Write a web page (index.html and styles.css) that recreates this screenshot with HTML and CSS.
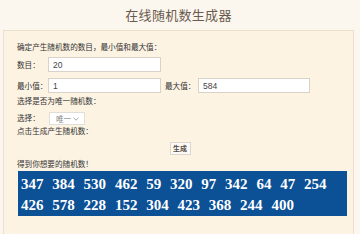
FILE: index.html
```html
<!DOCTYPE html>
<html lang="zh-CN">
<head>
    <meta charset="UTF-8">
    <meta name="viewport" content="width=device-width, initial-scale=1.0">
    <title>在线随机数生成器</title>
    <link rel="stylesheet" href="styles.css">
</head>
<body>
    <div class="page">
        <h1 class="title">在线随机数生成器</h1>
        <div class="panel">
            <p class="line">确定产生随机数的数目，最小值和最大值：</p>
            <div class="row row-count">
                <label class="label">数目：</label>
                <input class="field" type="text" value="20">
            </div>
            <div class="row row-range">
                <label class="label">最小值：</label>
                <input class="field" type="text" value="1">
                <label class="label label-max">最大值：</label>
                <input class="field field-max" type="text" value="584">
            </div>
            <p class="line line-unique">选择是否为唯一随机数：</p>
            <div class="row row-select">
                <label class="label">选择：</label>
                <div class="select">
                    <span class="select-text">唯一</span>
                    <svg class="select-arrow" width="6" height="4" viewBox="0 0 6 4">
                        <path d="M0.5 0.8 L3 3.2 L5.5 0.8" fill="none" stroke="#9a9a9a" stroke-width="0.9"/>
                    </svg>
                </div>
            </div>
            <p class="line">点击生成产生随机数：</p>
            <div class="button-row">
                <button class="gen-btn">生成</button>
            </div>
            <p class="line line-result">得到你想要的随机数！</p>
            <div class="result">
                <span>347</span><span>384</span><span>530</span><span>462</span><span>59</span><span>320</span><span>97</span><span>342</span><span>64</span><span>47</span><span>254</span>
                <span>426</span><span>578</span><span>228</span><span>152</span><span>304</span><span>423</span><span>368</span><span>244</span><span>400</span>
            </div>
        </div>
    </div>
</body>
</html>
```

FILE: styles.css
```css
* {
    margin: 0;
    padding: 0;
    box-sizing: border-box;
}
body {
    font-family: "Noto Sans CJK SC", "Noto Sans", sans-serif;
    background: #fbf6ee;
    color: #333;
    width: 360px;
    height: 234px;
    overflow: hidden;
}
.page {
    padding: 0 6px 0 3px;
}
.title {
    height: 30px;
    line-height: 30px;
    text-align: center;
    font-size: 13px;
    font-weight: normal;
    color: #6b5b4f;
    letter-spacing: 0.3px;
}
.panel {
    background: #fdf3e3;
    border: 1px solid #ecdfcc;
    border-bottom: none;
    padding: 10px 8px 0 13px;
    height: 204px;
}
.line {
    font-size: 7.6px;
    height: 12px;
    line-height: 12px;
    color: #333;
}
.row {
    display: flex;
    align-items: center;
    height: 15px;
}
.row-count {
    margin-top: 4px;
}
.row-range {
    margin-top: 6px;
}
.line-unique {
    margin-top: 2px;
}
.row-select {
    margin-top: 3px;
}
.label {
    font-size: 7.6px;
    width: 31px;
    flex-shrink: 0;
}
.label-max {
    margin-left: 4px;
    width: 33px;
}
.field {
    width: 113px;
    height: 15px;
    border: 1px solid #d9d2c8;
    background: #fff;
    font-family: "Liberation Sans", Arial, sans-serif;
    font-size: 8.5px;
    color: #444;
    padding: 0 4px;
    outline: none;
}
.field-max {
    width: 112px;
}
.select {
    margin-left: 1px;
    width: 36px;
    height: 13px;
    margin-top: 2px;
    border: 1px solid #e2ddd6;
    background: #fff;
    display: flex;
    align-items: center;
    justify-content: space-between;
    padding: 0 5px 0 6px;
}
.select-text {
    font-size: 7.6px;
    color: #888;
}
.select-arrow {
    display: block;
}
.button-row {
    margin-top: 5px;
    height: 13px;
    display: flex;
    justify-content: center;
    padding-right: 2px;
}
.gen-btn {
    width: 21px;
    height: 13px;
    border: 1px solid #ddd6cc;
    background: #fbfaf8;
    font-family: "Noto Sans CJK SC", sans-serif;
    font-size: 7px;
    font-weight: bold;
    color: #5a4a3e;
    line-height: 11px;
}
.line-result {
    margin-top: 3px;
}
.result {
    margin-top: 1px;
    margin-left: 1px;
    width: 329px;
    height: 45px;
    background: #0c5096;
    padding: 3px 3px 0 3px;
    display: flex;
    flex-wrap: wrap;
    column-gap: 8.8px;
    font-family: "Liberation Serif", "Times New Roman", serif;
    font-weight: bold;
    font-size: 15px;
    line-height: 20px;
    color: #fff;
}
```
